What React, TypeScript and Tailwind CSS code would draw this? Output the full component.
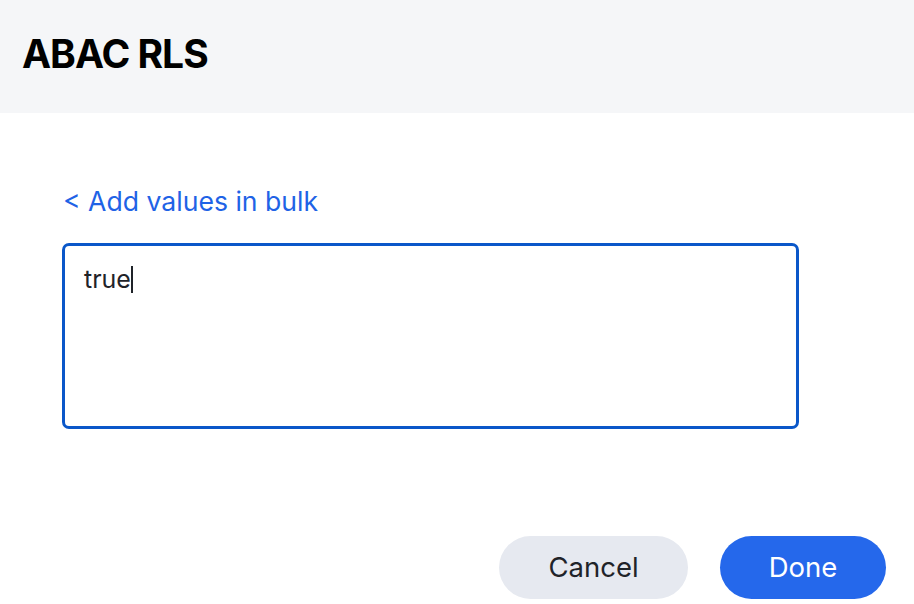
import React from "react";

export default function App() {
  return (
    <div
      className="w-[914px] h-[604px] bg-white overflow-hidden flex flex-col"
      style={{ fontFamily: "Inter, 'Noto Sans', sans-serif" }}
    >
      <div className="h-[113px] bg-[#f5f6f8] flex items-center px-[22px] shrink-0">
        <h1 className="text-[39px] font-bold text-black tracking-[-1px] leading-none -mt-[7px]">
          ABAC RLS
        </h1>
      </div>
      <div className="flex-1 flex flex-col px-[62px] pt-[72px]">
        <button className="self-start text-[26.6px] leading-[32px] text-[#1f63e6] ml-[1px]">
          &lt; Add values in bulk
        </button>
        <div className="mt-[26px] w-[737px] h-[186px] border-[3px] border-[#0a57c9] rounded-[7px] px-[19px] pt-[17px]">
          <div className="flex items-center text-[25px] leading-[32px] text-[#1f2329]">
            <span>true</span>
            <span className="inline-block w-[2px] h-[27px] bg-[#1f2329]" />
          </div>
        </div>
      </div>
      <div className="flex justify-end gap-[32px] pr-[28px] pb-[5px]">
        <button className="w-[189px] h-[63px] rounded-full bg-[#e6e9f0] text-[27.5px] text-[#1f2329]">
          Cancel
        </button>
        <button className="w-[166px] h-[63px] rounded-full bg-[#2568eb] text-[27.5px] text-white">
          Done
        </button>
      </div>
    </div>
  );
}
